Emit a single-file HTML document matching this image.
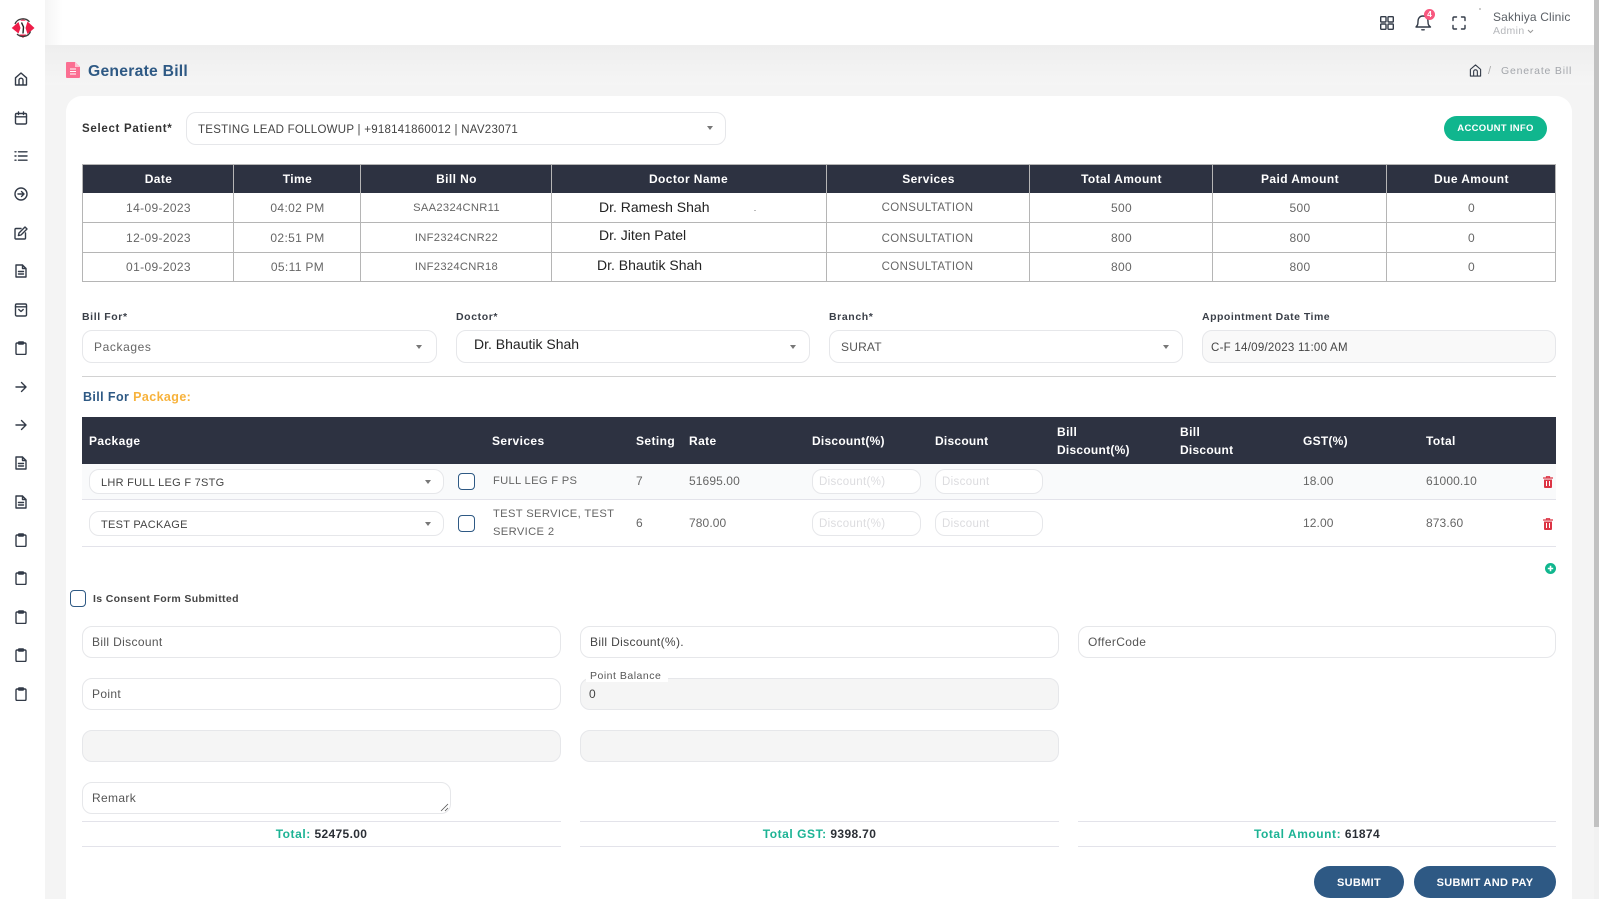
<!DOCTYPE html>
<html><head><meta charset="utf-8"><title>Generate Bill</title>
<style>
html,body{margin:0;padding:0;width:1599px;height:899px;overflow:hidden;background:#f4f4f4;font-family:"Liberation Sans",sans-serif;}
*{box-sizing:border-box}
#root{position:relative;width:1599px;height:899px;overflow:hidden;background:#f4f4f4}
.a{position:absolute}
.t{position:absolute;white-space:nowrap;line-height:16px;height:16px;font-size:12px;letter-spacing:.35px;color:#666}
.c{text-align:center}
.h{color:#fff;font-weight:bold;letter-spacing:.4px}
.l{color:#3a3f48;font-size:10.5px;letter-spacing:.6px;font-weight:bold}
.f{position:absolute;border:1.3px solid #e6e7ea;border-radius:10px;background:#fff}
.g{background:#f5f5f5}
.line{position:absolute;background:#b5b5b5}
.l2{position:absolute;background:#e3e3ea;height:1.3px}
.car{position:absolute;width:0;height:0;border-left:3.5px solid transparent;border-right:3.5px solid transparent;border-top:4px solid #777}
.cb{position:absolute;width:17px;height:17px;border:1.3px solid #2e5984;border-radius:4px;background:#fff}
.doc{color:#222;font-size:14px;letter-spacing:.1px}
.ph{color:#dcdcdf;font-size:11.5px}
.n{letter-spacing:.1px}
.s{font-size:11.2px;letter-spacing:.3px}
svg.i{position:absolute;fill:none;stroke:#333b48;stroke-width:1.4;stroke-linecap:round;stroke-linejoin:round}
.btn{position:absolute;background:#2e5984;color:#fff;border-radius:16px;text-align:center;font-weight:bold;font-size:11px;letter-spacing:.3px;line-height:34px;height:32px}
.tl{color:#1cb394;font-weight:bold;letter-spacing:.55px}
.tv{color:#2b2f36;font-weight:bold}
</style></head><body>
<div id="root">

<!-- page shading -->
<div class="a" style="left:45px;top:45px;width:1549px;height:40px;background:linear-gradient(#eeeeee,#f5f5f5)"></div>
<!-- header -->
<div class="a" style="left:0;top:0;width:1594px;height:45px;background:#fff"></div>
<!-- sidebar -->
<div class="a" style="left:0;top:0;width:45px;height:899px;background:#fff"></div>
<div class="a" style="left:45px;top:0;width:18px;height:45px;background:linear-gradient(90deg,#f5f5f5,#fff)"></div>
<!-- scrollbar -->
<div class="a" style="left:1594px;top:0;width:5px;height:899px;background:#f1f1f1"></div>
<div class="a" style="left:1594px;top:0;width:5px;height:827px;background:#c1c1c1"></div>

<!-- logo -->
<svg class="a" style="left:10px;top:16px" width="26" height="24" viewBox="0 0 26 24">
<path d="M1.700 12 L8.500 6 L10.500 12 L8.500 17.500 Z" fill="#ee1d48"/>
<path d="M24.500 12 L17.500 5.500 L15.500 12 L17.500 18 Z" fill="#ee1d48"/>
<path d="M9 18.500 L13 22 L16.500 18.500 Z" fill="#ee1d48"/>
<path d="M10 5 L13 2.500 L16 5 Z" fill="#ee1d48" opacity=".7"/>
<path d="M5 8 C7 2.500 15 .8 19.500 5.800" fill="none" stroke="#3a3a3a" stroke-width="1.300"/>
<path d="M20.500 15.500 C18.500 21 11 22 7 18" fill="none" stroke="#3a3a3a" stroke-width="1.300"/>
<path d="M11.500 6.500 L13.500 11 L13 17.500" fill="none" stroke="#222" stroke-width="1.400"/>
</svg>

<!-- sidebar icons -->
<svg class="i" style="left:14px;top:72px" width="14" height="14" viewBox="0 0 14 14"><path d="M1.500 13V5.800L7 1l5.500 4.800V13zM5 13V8.200a2 2 0 0 1 4 0V13"/></svg>
<svg class="i" style="left:14px;top:111px" width="14" height="14" viewBox="0 0 14 14"><rect x="1.500" y="2.500" width="11" height="10.500" rx="1.200"/><path d="M1.500 5.800h11M4.500 1v2.500M9.500 1v2.500"/></svg>
<svg class="i" style="left:14px;top:149px" width="14" height="14" viewBox="0 0 14 14"><path d="M4.500 2.800H13M4.500 7H13M4.500 11.200H13M1 2.800h1M1 7h1M1 11.200h1"/></svg>
<svg class="i" style="left:14px;top:187px" width="14" height="14" viewBox="0 0 14 14"><circle cx="7" cy="7" r="6"/><path d="M4 7h6M7.500 4.500 10 7 7.500 9.500"/></svg>
<svg class="i" style="left:14px;top:226px" width="14" height="14" viewBox="0 0 14 14"><path d="M7 2.500H2a1 1 0 0 0-1 1V12a1 1 0 0 0 1 1h8.500a1 1 0 0 0 1-1V7M11 1l2 2-6 6-2.600.6L5 7z"/></svg>
<svg class="i" style="left:14px;top:264px" width="14" height="14" viewBox="0 0 14 14"><path d="M2 1h6.500L12 4.500V13H2zM8.500 1v3.500H12M4.500 7.500h5M4.500 10h5"/></svg>
<svg class="i" style="left:14px;top:303px" width="14" height="14" viewBox="0 0 14 14"><rect x="1.500" y="1" width="11" height="12" rx="1.200"/><path d="M1.500 3.800h11M4.800 6.500 7 8.500l2.200-2"/></svg>
<svg class="i" style="left:14px;top:341px" width="14" height="14" viewBox="0 0 14 14"><rect x="2" y="2" width="10" height="11.500" rx="1.200"/><rect x="4.500" y="1" width="5" height="2" rx=".6"/></svg>
<svg class="i" style="left:14px;top:380px" width="14" height="14" viewBox="0 0 14 14"><path d="M2 7h10M7.500 2.500 12 7l-4.500 4.500"/></svg>
<svg class="i" style="left:14px;top:418px" width="14" height="14" viewBox="0 0 14 14"><path d="M2 7h10M7.500 2.500 12 7l-4.500 4.500"/></svg>
<svg class="i" style="left:14px;top:456px" width="14" height="14" viewBox="0 0 14 14"><path d="M2 1h6.500L12 4.500V13H2zM8.500 1v3.500H12M4.500 7.500h5M4.500 10h5"/></svg>
<svg class="i" style="left:14px;top:495px" width="14" height="14" viewBox="0 0 14 14"><path d="M2 1h6.500L12 4.500V13H2zM8.500 1v3.500H12M4.500 7.500h5M4.500 10h5"/></svg>
<svg class="i" style="left:14px;top:533px" width="14" height="14" viewBox="0 0 14 14"><rect x="2" y="2" width="10" height="11.500" rx="1.200"/><rect x="4.500" y="1" width="5" height="2" rx=".6"/></svg>
<svg class="i" style="left:14px;top:571px" width="14" height="14" viewBox="0 0 14 14"><rect x="2" y="2" width="10" height="11.500" rx="1.200"/><rect x="4.500" y="1" width="5" height="2" rx=".6"/></svg>
<svg class="i" style="left:14px;top:610px" width="14" height="14" viewBox="0 0 14 14"><rect x="2" y="2" width="10" height="11.500" rx="1.200"/><rect x="4.500" y="1" width="5" height="2" rx=".6"/></svg>
<svg class="i" style="left:14px;top:648px" width="14" height="14" viewBox="0 0 14 14"><rect x="2" y="2" width="10" height="11.500" rx="1.200"/><rect x="4.500" y="1" width="5" height="2" rx=".6"/></svg>
<svg class="i" style="left:14px;top:687px" width="14" height="14" viewBox="0 0 14 14"><rect x="2" y="2" width="10" height="11.500" rx="1.200"/><rect x="4.500" y="1" width="5" height="2" rx=".6"/></svg>

<!-- header right -->
<svg class="i" style="left:1380px;top:16px" width="14" height="14" viewBox="0 0 14 14"><rect x=".7" y=".7" width="5.300" height="5.300" rx=".8"/><rect x="8" y=".7" width="5.300" height="5.300" rx=".8"/><rect x=".7" y="8" width="5.300" height="5.300" rx=".8"/><rect x="8" y="8" width="5.300" height="5.300" rx=".8"/></svg>
<svg class="i" style="left:1415px;top:13px" width="17" height="18" viewBox="0 0 17 18"><path d="M1 14c1.500-1.500 2-2.500 2-5.500C3 5 5 3 8 3s5 2 5 5.500c0 3 .5 4 2.500 5.500zM6.800 16.800h2.400"/></svg>
<div class="a" style="left:1424px;top:8.500px;width:11px;height:11px;border-radius:50%;background:#f8587f;color:#fff;font-size:8.500px;font-weight:bold;text-align:center;line-height:11px">4</div>
<svg class="i" style="left:1452px;top:16px" width="14" height="14" viewBox="0 0 14 14"><path d="M1 4.500V2a1 1 0 0 1 1-1h2.500M9.500 1H12a1 1 0 0 1 1 1v2.500M13 9.500V12a1 1 0 0 1-1 1H9.500M4.500 13H2a1 1 0 0 1-1-1V9.500"/></svg>
<div class="a" style="left:1479px;top:8px;width:2px;height:2px;background:#ccc"></div>
<div class="t" style="left:1493px;top:9px;font-size:12px;letter-spacing:.15px;color:#5b6066">Sakhiya Clinic</div>
<div class="t" style="left:1493px;top:23px;font-size:10.500px;color:#b5b7bb">Admin</div>
<svg class="a" style="left:1527px;top:29px" width="7" height="5" viewBox="0 0 7 5"><path d="M1 1l2.500 2.500L6 1" fill="none" stroke="#999" stroke-width="1"/></svg>

<!-- title -->
<svg class="a" style="left:66px;top:62px" width="14" height="16" viewBox="0 0 14 16"><path d="M1 0h8l5 5v10a1 1 0 0 1-1 1H1a1 1 0 0 1-1-1V1a1 1 0 0 1 1-1z" fill="#fb6f92"/><path d="M4 7h6M4 9.500h6M4 12h6" stroke="#fff" stroke-width="1"/><path d="M9 0v5h5" fill="#ffc4d3"/></svg>
<div class="t" style="left:88px;top:64px;font-size:15.700px;font-weight:bold;color:#2e5984;letter-spacing:.25px">Generate Bill</div>
<svg class="i" style="left:1469px;top:64px;stroke-width:1.200" width="13" height="13" viewBox="0 0 14 14"><path d="M1.500 13V5.800L7 1l5.500 4.800V13zM5 13V8.200a2 2 0 0 1 4 0V13"/></svg>
<div class="t" style="left:1488px;top:63px;font-size:11px;color:#aaa">/</div>
<div class="t" style="left:1501px;top:63px;font-size:10.500px;color:#a3a6ab;letter-spacing:.8px">Generate Bill</div>

<!-- card -->
<div class="a" style="left:66px;top:96px;width:1506px;height:803px;background:#fff;border-radius:16px 16px 0 0"></div>

<div class="t" style="left:82px;top:121px;font-weight:bold;font-size:11.500px;color:#333;letter-spacing:.7px">Select Patient*</div>
<div class="f" style="left:186px;top:112px;width:540px;height:33px"></div>
<div class="t" style="left:198px;top:122px;font-size:11.500px;color:#444;letter-spacing:.26px">TESTING LEAD FOLLOWUP | +918141860012 | NAV23071</div>
<div class="car" style="left:707px;top:126px"></div>
<div class="btn" style="left:1444px;top:116px;width:103px;height:25px;line-height:26px;background:#10b68e;font-size:9.500px;letter-spacing:.3px;border-radius:13px">ACCOUNT INFO</div>

<!-- table 1 -->
<div class="a" style="left:82px;top:165px;width:1474px;height:28px;background:#2d3241"></div>
<div class="line" style="left:82px;top:164px;width:1474px;height:1.300px"></div>
<div class="line" style="left:82px;top:222px;width:1474px;height:1.300px"></div>
<div class="line" style="left:82px;top:252px;width:1474px;height:1.300px"></div>
<div class="line" style="left:82px;top:281px;width:1474px;height:1.300px"></div>
<div class="line" style="left:82px;top:164px;width:1.300px;height:118px"></div>
<div class="line" style="left:233px;top:164px;width:1.300px;height:118px"></div>
<div class="line" style="left:360px;top:164px;width:1.300px;height:118px"></div>
<div class="line" style="left:551px;top:164px;width:1.300px;height:118px"></div>
<div class="line" style="left:826px;top:164px;width:1.300px;height:118px"></div>
<div class="line" style="left:1029px;top:164px;width:1.300px;height:118px"></div>
<div class="line" style="left:1212px;top:164px;width:1.300px;height:118px"></div>
<div class="line" style="left:1386px;top:164px;width:1.300px;height:118px"></div>
<div class="line" style="left:1555px;top:164px;width:1.300px;height:118px"></div>

<div class="t c h" style="left:83px;width:151px;top:171px">Date</div>
<div class="t c h" style="left:234px;width:127px;top:171px">Time</div>
<div class="t c h" style="left:361px;width:191px;top:171px">Bill No</div>
<div class="t c h" style="left:551px;width:275px;top:171px">Doctor Name</div>
<div class="t c h" style="left:827px;width:203px;top:171px">Services</div>
<div class="t c h" style="left:1030px;width:183px;top:171px">Total Amount</div>
<div class="t c h" style="left:1213px;width:174px;top:171px">Paid Amount</div>
<div class="t c h" style="left:1387px;width:169px;top:171px">Due Amount</div>

<div class="t c" style="left:83px;width:151px;top:200px">14-09-2023</div>
<div class="t c" style="left:234px;width:127px;top:200px">04:02 PM</div>
<div class="t c" style="left:361px;width:191px;top:200px;font-size:11.200px;letter-spacing:.3px">SAA2324CNR11</div>
<div class="t doc" style="left:599px;top:199px;letter-spacing:0">Dr. Ramesh Shah</div>
<div class="a" style="left:754px;top:210px;width:1.500px;height:1px;background:#bbb"></div>
<div class="t c" style="left:826px;width:203px;top:200px;font-size:11.500px">CONSULTATION</div>
<div class="t c" style="left:1030px;width:183px;top:200px">500</div>
<div class="t c" style="left:1213px;width:174px;top:200px">500</div>
<div class="t c" style="left:1387px;width:169px;top:200px">0</div>

<div class="t c" style="left:83px;width:151px;top:230px">12-09-2023</div>
<div class="t c" style="left:234px;width:127px;top:230px">02:51 PM</div>
<div class="t c" style="left:361px;width:191px;top:230px;font-size:11.200px;letter-spacing:.3px">INF2324CNR22</div>
<div class="t doc" style="left:599px;top:227px;letter-spacing:0">Dr. Jiten Patel</div>
<div class="t c" style="left:826px;width:203px;top:231px;font-size:11.500px">CONSULTATION</div>
<div class="t c" style="left:1030px;width:183px;top:230px">800</div>
<div class="t c" style="left:1213px;width:174px;top:230px">800</div>
<div class="t c" style="left:1387px;width:169px;top:230px">0</div>

<div class="t c" style="left:83px;width:151px;top:259px">01-09-2023</div>
<div class="t c" style="left:234px;width:127px;top:259px">05:11 PM</div>
<div class="t c" style="left:361px;width:191px;top:259px;font-size:11.200px;letter-spacing:.3px">INF2324CNR18</div>
<div class="t doc" style="left:597px;top:257px;letter-spacing:0">Dr. Bhautik Shah</div>
<div class="t c" style="left:826px;width:203px;top:259px;font-size:11.500px">CONSULTATION</div>
<div class="t c" style="left:1030px;width:183px;top:259px">800</div>
<div class="t c" style="left:1213px;width:174px;top:259px">800</div>
<div class="t c" style="left:1387px;width:169px;top:259px">0</div>

<!-- selects row -->
<div class="t l" style="left:82px;top:309px">Bill For*</div>
<div class="t l" style="left:456px;top:309px">Doctor*</div>
<div class="t l" style="left:829px;top:309px">Branch*</div>
<div class="t l" style="left:1202px;top:309px;letter-spacing:.5px">Appointment Date Time</div>
<div class="f" style="left:82px;top:330px;width:355px;height:33px"></div>
<div class="f" style="left:456px;top:330px;width:354px;height:33px"></div>
<div class="f" style="left:829px;top:330px;width:354px;height:33px"></div>
<div class="f" style="left:1202px;top:330px;width:354px;height:33px;background:#f9f9f9"></div>
<div class="t" style="left:94px;top:339px;color:#666;letter-spacing:.6px">Packages</div>
<div class="t doc" style="left:474px;top:336px;letter-spacing:0">Dr. Bhautik Shah</div>
<div class="t" style="left:841px;top:339px;color:#555;letter-spacing:.2px">SURAT</div>
<div class="t" style="left:1211px;top:340px;color:#444;font-size:11.500px;letter-spacing:.26px">C-F 14/09/2023 11:00 AM</div>
<div class="car" style="left:416px;top:345px"></div>
<div class="car" style="left:790px;top:345px"></div>
<div class="car" style="left:1163px;top:345px"></div>
<div class="a" style="left:82px;top:376px;width:1474px;height:1.300px;background:#d2d2d2"></div>

<div class="t" style="left:83px;top:389px;font-size:12.500px;font-weight:bold;color:#2e5984;letter-spacing:.4px">Bill For <span style="color:#f7b23b">Package:</span></div>

<!-- table 2 -->
<div class="a" style="left:82px;top:417px;width:1474px;height:47px;background:#2d3241"></div>
<div class="a" style="left:82px;top:464px;width:1474px;height:35px;background:#f9fafb"></div>
<div class="l2" style="left:82px;top:499px;width:1474px"></div>
<div class="l2" style="left:82px;top:546px;width:1474px"></div>
<div class="t h" style="left:89px;top:433px">Package</div>
<div class="t h" style="left:492px;top:433px">Services</div>
<div class="t h" style="left:636px;top:433px">Seting</div>
<div class="t h" style="left:689px;top:433px">Rate</div>
<div class="t h" style="left:812px;top:433px;letter-spacing:.25px">Discount(%)</div>
<div class="t h" style="left:935px;top:433px;letter-spacing:.25px">Discount</div>
<div class="t h" style="left:1057px;top:424px">Bill</div>
<div class="t h" style="left:1057px;top:442px;letter-spacing:.25px">Discount(%)</div>
<div class="t h" style="left:1180px;top:424px">Bill</div>
<div class="t h" style="left:1180px;top:442px;letter-spacing:.25px">Discount</div>
<div class="t h" style="left:1303px;top:433px;letter-spacing:.25px">GST(%)</div>
<div class="t h" style="left:1426px;top:433px">Total</div>

<div class="f" style="left:89px;top:469px;width:355px;height:25px"></div>
<div class="t" style="left:101px;top:475px;font-size:11px;color:#444;letter-spacing:.28px">LHR FULL LEG F 7STG</div>
<div class="car" style="left:425px;top:480px"></div>
<div class="cb" style="left:458px;top:473px"></div>
<div class="t s" style="left:493px;top:473px">FULL LEG F PS</div>
<div class="t n" style="left:636px;top:473px">7</div>
<div class="t n" style="left:689px;top:473px">51695.00</div>
<div class="f" style="left:812px;top:469px;width:109px;height:25px"></div>
<div class="t ph" style="left:819px;top:474px">Discount(%)</div>
<div class="f" style="left:935px;top:469px;width:108px;height:25px"></div>
<div class="t ph" style="left:942px;top:474px">Discount</div>
<div class="t n" style="left:1303px;top:473px">18.00</div>
<div class="t n" style="left:1426px;top:473px">61000.10</div>

<div class="f" style="left:89px;top:511px;width:355px;height:25px"></div>
<div class="t" style="left:101px;top:517px;font-size:11px;color:#444;letter-spacing:.28px">TEST PACKAGE</div>
<div class="car" style="left:425px;top:522px"></div>
<div class="cb" style="left:458px;top:515px"></div>
<div class="t s" style="left:493px;top:506px;letter-spacing:.35px">TEST SERVICE, TEST</div>
<div class="t s" style="left:493px;top:524px;letter-spacing:.35px">SERVICE 2</div>
<div class="t n" style="left:636px;top:515px">6</div>
<div class="t n" style="left:689px;top:515px">780.00</div>
<div class="f" style="left:812px;top:511px;width:109px;height:25px"></div>
<div class="t ph" style="left:819px;top:516px">Discount(%)</div>
<div class="f" style="left:935px;top:511px;width:108px;height:25px"></div>
<div class="t ph" style="left:942px;top:516px">Discount</div>
<div class="t n" style="left:1303px;top:515px">12.00</div>
<div class="t n" style="left:1426px;top:515px">873.60</div>

<svg class="a" style="left:1543px;top:476px" width="10" height="12" viewBox="0 0 10 12"><path d="M0 2h10M3.500 2V.7h3V2" fill="none" stroke="#dc3545" stroke-width="1.200"/><path d="M1 3.500h8V11a1 1 0 0 1-1 1H2a1 1 0 0 1-1-1z" fill="#dc3545"/><path d="M3.500 5v5M6.500 5v5" stroke="#fff" stroke-width="1"/></svg>
<svg class="a" style="left:1543px;top:518px" width="10" height="12" viewBox="0 0 10 12"><path d="M0 2h10M3.500 2V.7h3V2" fill="none" stroke="#dc3545" stroke-width="1.200"/><path d="M1 3.500h8V11a1 1 0 0 1-1 1H2a1 1 0 0 1-1-1z" fill="#dc3545"/><path d="M3.500 5v5M6.500 5v5" stroke="#fff" stroke-width="1"/></svg>
<svg class="a" style="left:1545px;top:563px" width="11" height="11" viewBox="0 0 11 11"><circle cx="5.500" cy="5.500" r="5.500" fill="#10b68e"/><path d="M2.800 5.500h5.400M5.500 2.800v5.400" stroke="#fff" stroke-width="1.600"/></svg>

<!-- consent -->
<div class="cb" style="left:70px;top:590px;width:16px"></div>
<div class="t" style="left:93px;top:591px;font-size:10.500px;font-weight:bold;color:#444;letter-spacing:.35px">Is Consent Form Submitted</div>

<!-- inputs -->
<div class="f" style="left:82px;top:626px;width:479px;height:32px"></div>
<div class="f" style="left:580px;top:626px;width:479px;height:32px"></div>
<div class="f" style="left:1078px;top:626px;width:478px;height:32px"></div>
<div class="t" style="left:92px;top:634px;color:#555">Bill Discount</div>
<div class="t" style="left:590px;top:634px;color:#444">Bill Discount(%).</div>
<div class="t" style="left:1088px;top:634px;color:#555">OfferCode</div>

<div class="f" style="left:82px;top:678px;width:479px;height:32px"></div>
<div class="t" style="left:92px;top:686px;color:#555">Point</div>
<div class="f g" style="left:580px;top:678px;width:479px;height:32px"></div>
<div class="a" style="left:586px;top:668px;width:82px;height:14px;background:#fff"></div>
<div class="t" style="left:590px;top:668px;font-size:10.500px;color:#555;letter-spacing:.5px">Point Balance</div>
<div class="t" style="left:589px;top:686px;color:#444">0</div>

<div class="f g" style="left:82px;top:730px;width:479px;height:32px"></div>
<div class="f g" style="left:580px;top:730px;width:479px;height:32px"></div>

<div class="f" style="left:82px;top:782px;width:369px;height:32px"></div>
<div class="t" style="left:92px;top:790px;color:#555">Remark</div>
<svg class="a" style="left:440px;top:803px" width="9" height="9" viewBox="0 0 9 9"><path d="M1 8 8 1M5 8 8 5" stroke="#555" stroke-width=".8"/></svg>

<div class="l2" style="left:82px;top:821px;width:479px"></div>
<div class="l2" style="left:82px;top:846px;width:479px"></div>
<div class="l2" style="left:580px;top:821px;width:479px"></div>
<div class="l2" style="left:580px;top:846px;width:479px"></div>
<div class="l2" style="left:1078px;top:821px;width:478px"></div>
<div class="l2" style="left:1078px;top:846px;width:478px"></div>

<div class="t c" style="left:82px;width:479px;top:826px"><span class="tl">Total:</span> <span class="tv">52475.00</span></div>
<div class="t c" style="left:580px;width:479px;top:826px"><span class="tl">Total GST:</span> <span class="tv">9398.70</span></div>
<div class="t c" style="left:1078px;width:478px;top:826px"><span class="tl">Total Amount:</span> <span class="tv">61874</span></div>

<div class="btn" style="left:1314px;top:866px;width:90px">SUBMIT</div>
<div class="btn" style="left:1414px;top:866px;width:142px">SUBMIT AND PAY</div>

</div>
</body></html>
